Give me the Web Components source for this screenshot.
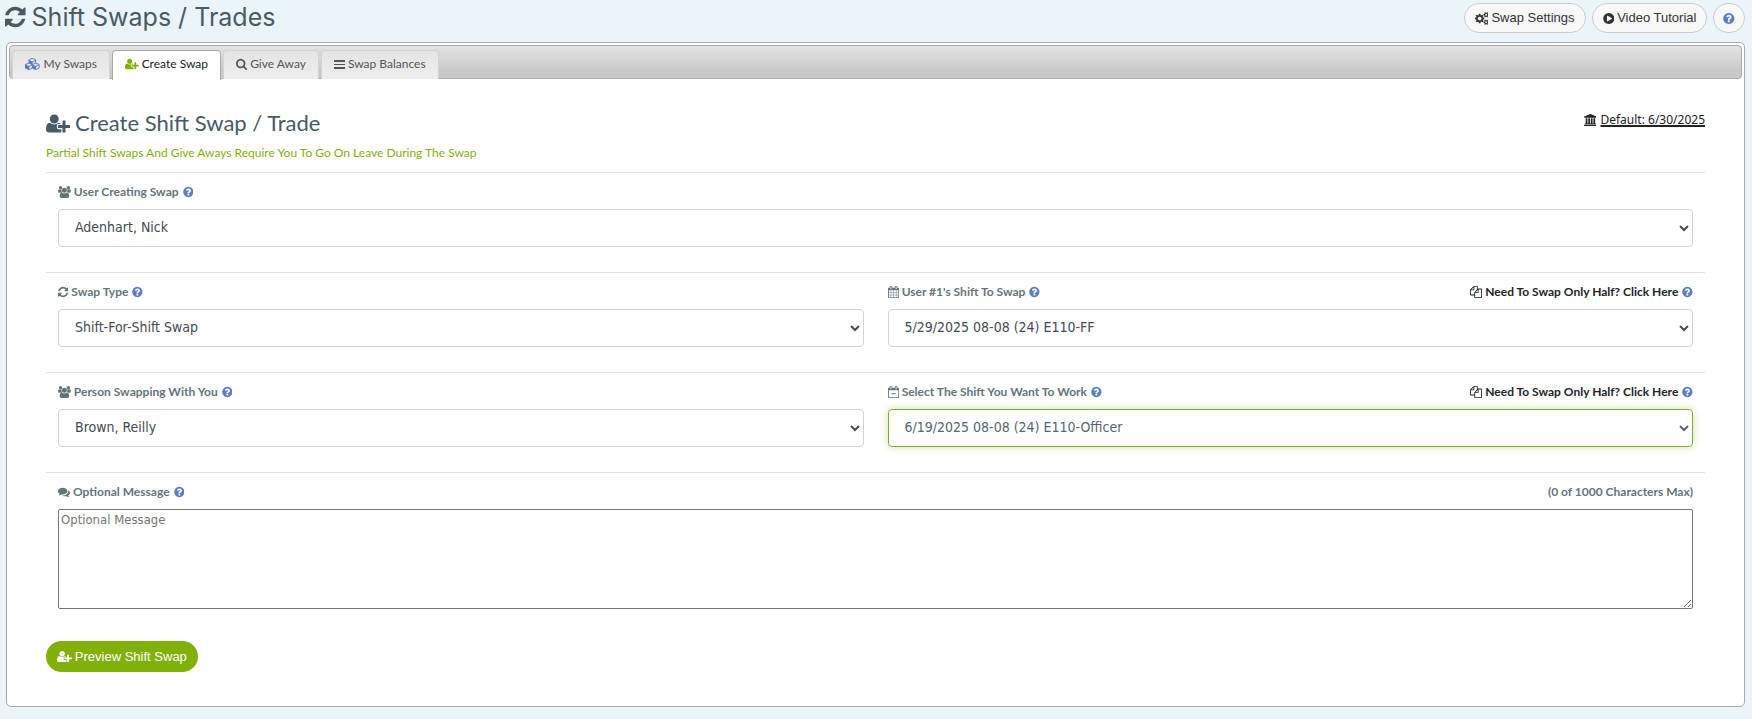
<!DOCTYPE html>
<html lang="en">
<head>
<meta charset="utf-8">
<title>Shift Swaps / Trades</title>
<style>
  html { min-height: 100%; background: #ebf4f8; }
  body {
    margin: 0; color: #222;
    font: 12px/18px Lato, "Open Sans", sans-serif;
    --slate: #475b66; --label: #65747b; --blue: #5c7dc4; --green: #82b00b; --line: #dee2e6;
    --ui: "Liberation Sans", Arial, sans-serif;
    --control: "DejaVu Sans Condensed", "DejaVu Sans", sans-serif;
  }
</style>
</head>
<body>
<swap-page></swap-page>
<script>
const ICONS = {
  refresh: ['128 0 1536 1792', 'M1639 1056q0 5-1 7-64 268-268 434.5t-478 166.5q-146 0-282.5-55t-243.5-157l-129 129q-19 19-45 19t-45-19-19-45v-448q0-26 19-45t45-19h448q26 0 45 19t19 45-19 45l-137 137q71 66 161 102t187 36q134 0 250-65t186-179q11-17 53-117 8-23 30-23h192q13 0 22.5 9.5t9.5 22.5zm25-800v448q0 26-19 45t-45 19h-448q-26 0-45-19t-19-45 19-45l138-138q-148-137-349-137-134 0-250 65t-186 179q-11 17-53 117-8 23-30 23h-199q-13 0-22.5-9.5t-9.5-22.5v-7q65-268 270-434.5t480-166.5q146 0 284 55.5t245 156.5l130-129q19-19 45-19t45 19 19 45z'],
  search: ['64 0 1664 1792', 'M1216 832q0-185-131.5-316.5t-316.5-131.5-316.5 131.5-131.5 316.5 131.5 316.5 316.5 131.5 316.5-131.5 131.5-316.5zm512 832q0 52-38 90t-90 38q-54 0-90-38l-343-342q-179 124-399 124-143 0-273.5-55.5t-225-150-150-225-55.5-273.5 55.5-273.5 150-225 225-150 273.5-55.5 273.5 55.5 225 150 150 225 55.5 273.5q0 220-124 399l343 343q37 37 37 90z'],
  bars: ['0 0 11 12', 'M0 2h11v2H0zM0 6h11v1H0zM0 9h11v2H0z'],
  help: ['96 0 1600 1792', 'M1024 1376v-192q0-14-9-23t-23-9h-192q-14 0-23 9t-9 23v192q0 14 9 23t23 9h192q14 0 23-9t9-23zm256-672q0-88-55.5-163t-138.5-116-170-41q-243 0-371 213-15 24 8 42l132 100q7 6 19 6 16 0 25-12 53-68 86-92 34-24 86-24 48 0 85.5 26t37.5 59q0 38-20 61t-68 45q-63 28-115.5 86.5t-52.5 125.5v36q0 14 9 23t23 9h192q14 0 23-9t9-23q0-19 21.5-49.5t54.5-49.5q32-18 49-28.5t46-35 44.5-48 28-60.5 12.5-81zm384 192q0 209-103 385.5t-279.5 279.5-385.5 103-385.5-103-279.5-279.5-103-385.5 103-385.5 279.5-279.5 385.5-103 385.5 103 279.5 279.5 103 385.5z'],
  play: ['96 0 1600 1792', 'M896 128q209 0 385.5 103t279.5 279.5 103 385.5-103 385.5-279.5 279.5-385.5 103-385.5-103-279.5-279.5-103-385.5 103-385.5 279.5-279.5 385.5-103zm384 823q32-18 32-55t-32-55l-544-320q-31-19-64-1-32 19-32 56v640q0 37 32 56 16 8 32 8 17 0 32-9z'],
  users: ['-64 0 1920 1792', 'M529 896q-162 5-265 128h-134q-82 0-138-40.5t-56-118.5q0-353 124-353 6 0 43.5 21t97.5 42.5 119 21.5q67 0 133-23-5 37-5 66 0 159 93 293zm1071 637q0 120-73 189.5t-194 69.5h-874q-121 0-194-69.5t-73-189.5q0-53 3.5-103.5t14-109 26.5-108.5 43-97.5 62-81 85.5-53.5 111.5-20q10 0 43 21.5t73 48 107 48 135 21.5 135-21.5 107-48 73-48 43-21.5q61 0 111.5 20t85.5 53.5 62 81 43 97.5 26.5 108.5 14 109 3.5 103.5zm-1024-1277q0 106-75 181t-181 75-181-75-75-181 75-181 181-75 181 75 75 181zm704 384q0 159-112.5 271.5t-271.5 112.5-271.5-112.5-112.5-271.5 112.5-271.5 271.5-112.5 271.5 112.5 112.5 271.5zm576 225q0 78-56 118.5t-138 40.5h-134q-103-123-265-128 93-134 93-293 0-29-5-66 66 23 133 23 59 0 119-21.5t97.5-42.5 43.5-21q124 0 124 353zm-128-609q0 106-75 181t-181 75-181-75-75-181 75-181 181-75 181 75 75 181z'],
  userplus: ['0 0 2048 1792', 'M704 896q-159 0-271.5-112.5t-112.5-271.5 112.5-271.5 271.5-112.5 271.5 112.5 112.5 271.5-112.5 271.5-271.5 112.5zm960 128h352q13 0 22.5 9.5t9.5 22.5v192q0 13-9.5 22.5t-22.5 9.5h-352v352q0 13-9.5 22.5t-22.5 9.5h-192q-13 0-22.5-9.5t-9.5-22.5v-352h-352q-13 0-22.5-9.5t-9.5-22.5v-192q0-13 9.5-22.5t22.5-9.5h352v-352q0-13 9.5-22.5t22.5-9.5h192q13 0 22.5 9.5t9.5 22.5v352zm-736 224q0 52 38 90t90 38h256v238q-68 50-171 50h-874q-121 0-194-69t-73-190q0-53 3.5-103.5t14-109 26.5-108.5 43-97.5 62-81 85.5-53.5 111.5-20q19 0 39 17 79 61 154.5 91.5t164.5 30.5 164.5-30.5 154.5-91.5q20-17 39-17 132 0 217 96h-223q-52 0-90 38t-38 90v192z'],
  calendar: ['64 0 1664 1792', 'M192 1664h288v-288h-288v288zm352 0h320v-288h-320v288zm-352-352h288v-320h-288v320zm352 0h320v-320h-320v320zm-352-384h288v-288h-288v288zm736 736h320v-288h-320v288zm-384-736h320v-288h-320v288zm768 736h288v-288h-288v288zm-384-352h320v-320h-320v320zm-352-864v-288q0-13-9.5-22.5t-22.5-9.5h-64q-13 0-22.5 9.5t-9.5 22.5v288q0 13 9.5 22.5t22.5 9.5h64q13 0 22.5-9.5t9.5-22.5zm736 864h288v-320h-288v320zm-384-384h320v-288h-320v288zm384 0h288v-288h-288v288zm32-480v-288q0-13-9.5-22.5t-22.5-9.5h-64q-13 0-22.5 9.5t-9.5 22.5v288q0 13 9.5 22.5t22.5 9.5h64q13 0 22.5-9.5t9.5-22.5zm384-64v1280q0 52-38 90t-90 38h-1408q-52 0-90-38t-38-90v-1280q0-52 38-90t90-38h128v-96q0-66 47-113t113-47h64q66 0 113 47t47 113v96h384v-96q0-66 47-113t113-47h64q66 0 113 47t47 113v96h128q52 0 90 38t38 90z'],
  calminus: ['64 0 1664 1792', 'M1728 384v1280q0 52-38 90t-90 38h-1408q-52 0-90-38t-38-90v-1280q0-52 38-90t90-38h128v-96q0-66 47-113t113-47h64q66 0 113 47t47 113v96h384v-96q0-66 47-113t113-47h64q66 0 113 47t47 113v96h128q52 0 90 38t38 90zM192 1664h1408v-1024h-1408zM448 160v288q0 32 32 32h64q32 0 32-32v-288q0-32-32-32h-64q-32 0-32 32zM1216 160v288q0 32 32 32h64q32 0 32-32v-288q0-32-32-32h-64q-32 0-32 32zM608 1088h576q32 0 32 32v64q0 32-32 32h-576q-32 0-32-32v-64q0-32 32-32z'],
  files: ['0 0 1792 1792', 'M1696 384q40 0 68 28t28 68v1216q0 40-28 68t-68 28h-960q-40 0-68-28t-28-68v-288h-544q-40 0-68-28t-28-68v-672q0-40 20-88t48-76l408-408q28-28 76-48t88-20h416q40 0 68 28t28 68v328q68-40 128-40h416zm-544 213l-299 299h299v-299zm-640-384l-299 299h299v-299zm196 647l316-316v-416h-384v416q0 40-28 68t-68 28h-416v640h512v-256q0-40 20-88t48-76zm956 804v-1152h-384v416q0 40-28 68t-68 28h-416v640h896z'],
  comments: ['0 0 1792 1792', 'M1408 768q0 139-94 257t-256.5 186.5-353.5 68.5q-86 0-176-16-124 88-278 128-36 9-86 16h-3q-11 0-20.5-8t-11.5-21q-1-3-1-6.5t.5-6.5 2-6l2.5-5 3.5-5.5 4-5 4.5-5 4-4.5q5-6 23-25t26-29.5 22.5-29 25-38.5 20.5-44q-124-72-195-177t-71-224q0-139 94-257t256.5-186.5 353.5-68.5 353.5 68.5 256.5 186.5 94 257zm384 256q0 120-71 224.5t-195 176.5q10 24 20.5 44t25 38.5 22.5 29 26 29.5 23 25q1 1 4 4.5t4.5 5 4 5 3.5 5.5l2.5 5 2 6 .5 6.5-1 6.5q-3 14-13 22t-22 7q-50-7-86-16-154-40-278-128-90 16-176 16-271 0-472-132 58 4 88 4 161 0 309-45t264-129q125-92 192-212t67-254q0-77-23-152 129 71 204 178t75 230z'],
  bank: ['0 0 1920 1792', 'M960 0l960 384v128h-128q0 26-20.5 45t-48.5 19h-1526q-28 0-48.5-19t-20.5-45h-128v-128zm-704 640h256v768h128v-768h256v768h128v-768h256v768h128v-768h256v768h59q28 0 48.5 19t20.5 45v64h-1664v-64q0-26 20.5-45t48.5-19h59v-768zm1595 960q28 0 48.5 19t20.5 45v128h-1920v-128q0-26 20.5-45t48.5-19h1782z'],
  cogs: ['0 0 1920 1792', 'M896 896q0-106-75-181t-181-75-181 75-75 181 75 181 181 75 181-75 75-181zm768 512q0-52-38-90t-90-38-90 38-38 90q0 53 37.5 90.5t90.5 37.5 90.5-37.5 37.5-90.5zm0-1024q0-52-38-90t-90-38-90 38-38 90q0 53 37.5 90.5t90.5 37.5 90.5-37.5 37.5-90.5zm-384 421v185q0 10-7 19.5t-16 10.5l-155 24q-11 35-32 76 34 48 90 115 7 11 7 20 0 12-7 19-23 30-82.5 89.5t-78.5 59.5q-11 0-21-7l-115-90q-37 19-77 31-11 108-23 155-7 24-30 24h-186q-11 0-20-7.5t-10-17.5l-23-153q-34-10-75-31l-118 89q-7 7-20 7-11 0-21-8-144-133-144-160 0-9 7-19 10-14 41-53t47-61q-23-44-35-82l-152-24q-10-1-17-9.5t-7-19.5v-185q0-10 7-19.5t16-10.5l155-24q11-35 32-76-34-48-90-115-7-11-7-20 0-12 7-20 22-30 82-89t79-59q11 0 21 7l115 90q34-18 77-32 11-108 23-154 7-24 30-24h186q11 0 20 7.5t10 17.5l23 153q34 10 75 31l118-89q8-7 20-7 11 0 21 8 144 133 144 160 0 8-7 19-12 16-42 54t-45 60q23 48 34 82l152 23q10 2 17 10.5t7 19.5zm640 533v140q0 16-149 31-12 27-30 52 51 113 51 138 0 4-4 7-122 71-124 71-8 0-46-47t-52-68q-20 2-30 2t-30-2q-14 21-52 68t-46 47q-2 0-124-71-4-3-4-7 0-25 51-138-18-25-30-52-149-15-149-31v-140q0-16 149-31 13-29 30-52-51-113-51-138 0-4 4-7 4-2 35-20t59-34 30-16q8 0 46 46.5t52 67.5q20-2 30-2t30 2q51-71 92-112l6-2q4 0 124 70 4 3 4 7 0 25-51 138 17 23 30 52 149 15 149 31zm0-1024v140q0 16-149 31-12 27-30 52 51 113 51 138 0 4-4 7-122 71-124 71-8 0-46-47t-52-68q-20 2-30 2t-30-2q-14 21-52 68t-46 47q-2 0-124-71-4-3-4-7 0-25 51-138-18-25-30-52-149-15-149-31v-140q0-16 149-31 13-29 30-52-51-113-51-138 0-4 4-7 4-2 35-20t59-34 30-16q8 0 46 46.5t52 67.5q20-2 30-2t30 2q51-71 92-112l6-2q4 0 124 70 4 3 4 7 0 25-51 138 17 23 30 52 149 15 149 31z'],
  cubes: ['0 0 2304 1792', 'M640 1632l384-192v-314l-384 164v342zm-64-454l404-173-404-173-404 173zm1088 454l384-192v-314l-384 164v342zm-64-454l404-173-404-173-404 173zm-448-293l384-165v-266l-384 164v267zm-64-379l441-189-441-189-441 189zm1088 518v416q0 36-19 67t-52 47l-448 224q-25 14-57 14t-57-14l-448-224q-4-2-7-4-2 2-7 4l-448 224q-25 14-57 14t-57-14l-448-224q-33-16-52-47t-19-67v-416q0-38 21.5-70t56.5-48l434-186v-400q0-38 21.5-70t56.5-48l448-192q23-10 50-10t50 10l448 192q35 16 56.5 48t21.5 70v400l434 186q36 16 57 48t21 70z']
};

/* Stamps an element from its markup; setup fills in what depends on attributes. */
function define(name, html, setup) {
  const template = document.createElement('template');
  template.innerHTML = html;
  customElements.define(name, class extends HTMLElement {
    connectedCallback() {
      if (this.shadowRoot) return;
      const root = this.attachShadow({ mode: 'open' });
      root.append(template.content.cloneNode(true));
      if (setup) setup.call(this, root);
    }
  });
}

/* Icon whose height is --icon; the width follows the glyph's own box. */
class UiIcon extends HTMLElement {
  static observedAttributes = ['name'];
  constructor() {
    super();
    this.attachShadow({ mode: 'open' }).innerHTML = `
      <style>
        :host { display: inline-flex; flex: none; height: var(--icon, 12px); }
        svg { display: block; height: 100%; width: auto; fill: currentColor; }
      </style>
      <svg aria-hidden="true"><path fill-rule="evenodd"/></svg>`;
  }
  attributeChangedCallback(attribute, old, name) {
    const icon = ICONS[name];
    if (!icon) return;
    const svg = this.shadowRoot.querySelector('svg');
    const box = icon[0].split(' ');
    svg.setAttribute('viewBox', icon[0]);
    svg.style.aspectRatio = box[2] + ' / ' + box[3];
    svg.firstElementChild.setAttribute('d', icon[1]);
  }
}
customElements.define('ui-icon', UiIcon);

define('help-link', `
  <style>
    :host { display: inline-flex; }
    a { display: flex; color: var(--blue); }
  </style>
  <a href="#help" aria-label="Help"><ui-icon name="help"></ui-icon></a>`);

define('pill-button', `
  <style>
    :host { display: block; }
    button {
      display: flex; align-items: center; gap: 3px; height: 30px; padding: 0 10px;
      border: 1px solid #ccc; border-radius: 15px; background: #f8f8f8; color: #333;
      font: 13px/18px var(--ui); cursor: pointer; --icon: 13px;
    }
    :host([primary]) button { height: 31px; border-color: var(--green); background: var(--green); color: #fff; }
    :host([round]) button { gap: 0; padding: 0 9px; color: var(--blue); }
    :host([round]) slot { display: none; }
  </style>
  <button type="button"><ui-icon></ui-icon><slot></slot></button>`,
  function (root) {
    root.querySelector('ui-icon').setAttribute('name', this.getAttribute('icon'));
    if (this.hasAttribute('round')) root.querySelector('button').setAttribute('aria-label', 'Help');
  });

define('page-header', `
  <style>
    :host { display: flex; justify-content: space-between; align-items: flex-start; height: 42px; padding: 0 7px 0 5px; }
    h1 {
      display: flex; align-items: center; gap: 6px; margin: 0; color: var(--slate);
      font: 400 25px/34px Inter, sans-serif; --icon: 24px;
    }
    nav { display: flex; gap: 6px; padding-top: 3px; }
  </style>
  <h1><ui-icon name="refresh"></ui-icon>Shift Swaps / Trades</h1>
  <nav>
    <pill-button icon="cogs">Swap Settings</pill-button>
    <pill-button icon="play">Video Tutorial</pill-button>
    <pill-button icon="help" round></pill-button>
  </nav>`);

define('tab-item', `
  <style>
    :host { display: block; }
    a {
      display: flex; align-items: center; gap: 3px; height: 26px; padding: 0 12px 2px;
      border: 1px solid #d3d3d3; border-bottom: 0; border-radius: 4px 4px 0 0;
      background: linear-gradient(#e4e4e4, #eee); color: #555; text-decoration: none;
    }
    :host([active]) a { padding-bottom: 3px; background: #fff; border-color: #aaa; color: #212121; }
    ui-icon { color: var(--tab-icon, #555); }
  </style>
  <a href="#tab"><ui-icon></ui-icon><slot></slot></a>`,
  function (root) {
    root.querySelector('ui-icon').setAttribute('name', this.getAttribute('icon'));
    if (this.hasAttribute('active')) root.querySelector('a').setAttribute('aria-current', 'page');
  });

define('tab-bar', `
  <style>
    :host {
      display: flex; align-items: flex-start; gap: 2px; box-sizing: border-box; height: 34px;
      padding: 4px 2px 0; border: 1px solid #aaa; border-radius: 4px;
      background: linear-gradient(#e3e3e3, #c9c9c9 80%);
    }
  </style>
  <slot></slot>`);

define('half-swap-link', `
  <style>
    :host { display: flex; align-items: center; gap: 4px; }
    a { display: flex; align-items: center; gap: 3px; color: #212529; font-weight: 700; text-decoration: none; }
  </style>
  <a href="#half"><ui-icon name="files"></ui-icon>Need To Swap Only Half? Click Here</a>
  <help-link></help-link>`);

/* A captioned control: a drop-down, or a text area when "multiline" is set. */
define('swap-field', `
  <style>
    :host { display: block; min-width: 0; padding: 10px 12px 25px; }
    .caption { display: flex; justify-content: space-between; height: 18px; margin-bottom: 8px; color: var(--label); font-weight: 700; }
    .name, label { display: flex; align-items: center; gap: 4px; }
    label { gap: 3px; }
    select, textarea { display: block; box-sizing: border-box; width: 100%; }
    select {
      height: 38px; padding: 5px 0 7px 12px; border: 1px solid #ced4da; border-radius: 4px;
      background-color: #fff; color: #444b52; font: 14px/18px var(--control);
    }
    :host([highlight]) select { border-color: #7fad2f; color: #566573; box-shadow: 0 0 8px rgba(130, 176, 11, .35); }
    textarea {
      height: 100px; margin: 0; padding: 1px 2px; border: 1px solid #767676; border-radius: 2px;
      font: 13px/18px var(--control);
    }
    textarea::placeholder { color: #757575; }
  </style>
  <div class="caption">
    <span class="name"><label for="control"><ui-icon></ui-icon><span></span></label><help-link></help-link></span>
    <slot></slot>
  </div>`,
  function (root) {
    const multiline = this.hasAttribute('multiline');
    const control = document.createElement(multiline ? 'textarea' : 'select');
    control.id = 'control';
    if (multiline) control.placeholder = this.getAttribute('label');
    else control.add(new Option(this.getAttribute('value')));
    root.querySelector('ui-icon').setAttribute('name', this.getAttribute('icon'));
    root.querySelector('label span').textContent = this.getAttribute('label');
    root.append(control);
  });

define('field-row', `
  <style>
    :host { display: grid; grid-auto-flow: column; grid-auto-columns: minmax(0, 1fr); border-top: 1px solid var(--line); }
  </style>
  <slot></slot>`);

define('swap-form', `
  <style>
    :host { display: block; padding: 31px 37px 32px; }
    header { display: flex; justify-content: space-between; align-items: flex-start; }
    h2 { display: flex; align-items: center; gap: 5px; margin: 0; color: var(--slate); font: 400 22px/26px Lato, sans-serif; --icon: 21px; }
    p { margin: 8px 0 10px; color: var(--green); }
    .default { display: flex; align-items: center; gap: 4px; color: #222; font: 12px/20px "Noto Sans", sans-serif; }
    .default span { text-decoration: underline; text-underline-offset: 2px; }
    footer { display: flex; padding-top: 7px; }
  </style>
  <header>
    <div>
      <h2><ui-icon name="userplus"></ui-icon>Create Shift Swap / Trade</h2>
      <p>Partial Shift Swaps And Give Aways Require You To Go On Leave During The Swap</p>
    </div>
    <a class="default" href="#default"><ui-icon name="bank"></ui-icon><span>Default: 6/30/2025</span></a>
  </header>
  <field-row>
    <swap-field icon="users" label="User Creating Swap" value="Adenhart, Nick"></swap-field>
  </field-row>
  <field-row>
    <swap-field icon="refresh" label="Swap Type" value="Shift-For-Shift Swap"></swap-field>
    <swap-field icon="calendar" label="User #1's Shift To Swap" value="5/29/2025 08-08 (24) E110-FF"><half-swap-link></half-swap-link></swap-field>
  </field-row>
  <field-row>
    <swap-field icon="users" label="Person Swapping With You" value="Brown, Reilly"></swap-field>
    <swap-field icon="calminus" label="Select The Shift You Want To Work" value="6/19/2025 08-08 (24) E110-Officer" highlight><half-swap-link></half-swap-link></swap-field>
  </field-row>
  <field-row>
    <swap-field icon="comments" label="Optional Message" multiline>(0 of 1000 Characters Max)</swap-field>
  </field-row>
  <footer><pill-button icon="userplus" primary>Preview Shift Swap</pill-button></footer>`);

define('swap-page', `
  <style>
    :host { display: block; padding-bottom: 12px; }
    main { margin: 0 7px 0 6px; padding: 2px; border: 1px solid #aaa; border-radius: 5px; background: #fff; }
  </style>
  <page-header></page-header>
  <main>
    <tab-bar>
      <tab-item icon="cubes" style="--tab-icon: var(--blue)">My Swaps</tab-item>
      <tab-item icon="userplus" active style="--tab-icon: var(--green)">Create Swap</tab-item>
      <tab-item icon="search">Give Away</tab-item>
      <tab-item icon="bars">Swap Balances</tab-item>
    </tab-bar>
    <swap-form></swap-form>
  </main>`);
</script>
</body>
</html>
